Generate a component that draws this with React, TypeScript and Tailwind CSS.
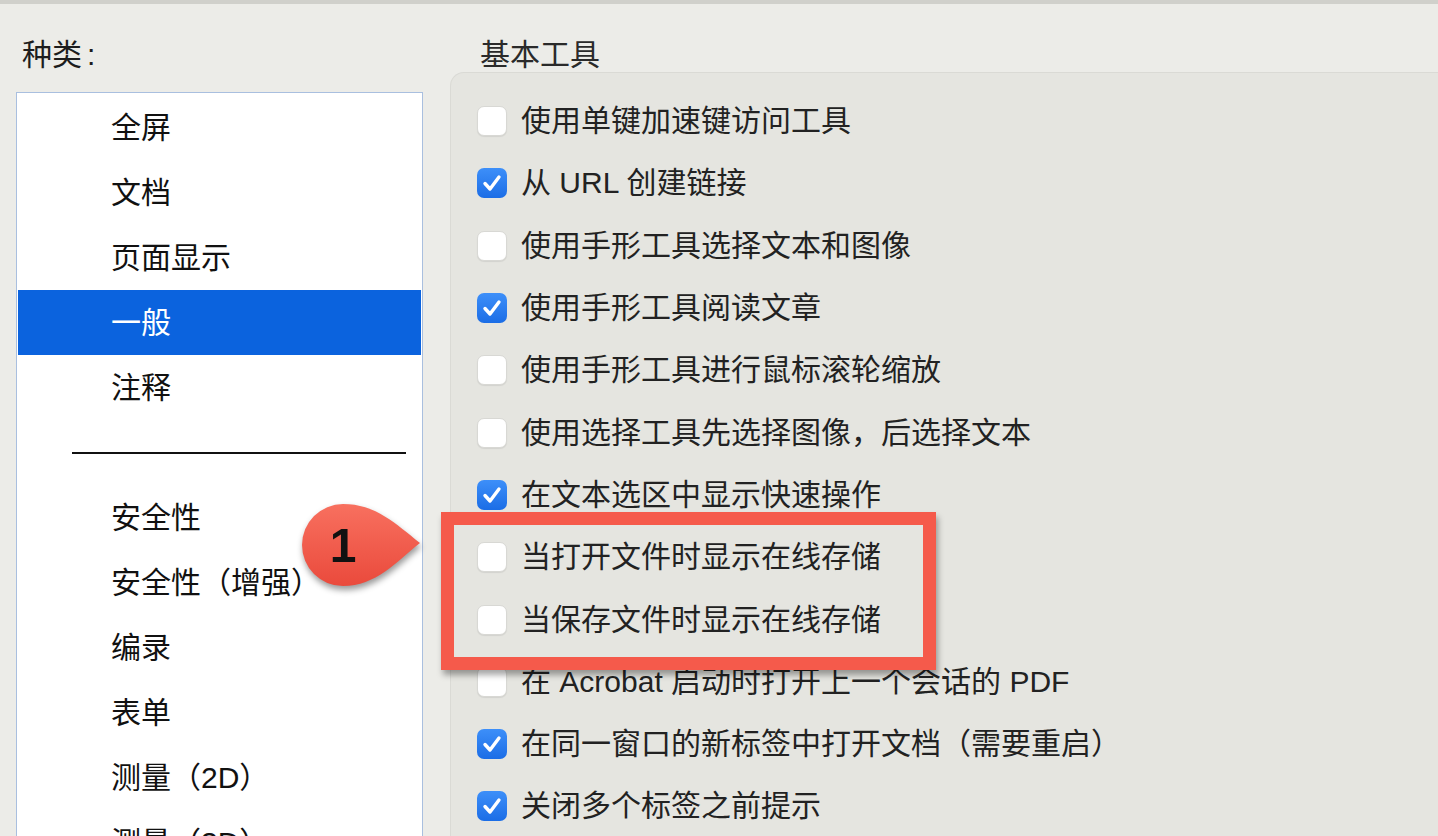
import React from 'react';

const font = { fontFamily: '"Liberation Sans", "Noto Sans CJK SC", sans-serif' };

const categories: (string | null)[] = [
  '全屏',
  '文档',
  '页面显示',
  '一般',
  '注释',
  null,
  '安全性',
  '安全性（增强）',
  '编录',
  '表单',
  '测量（2D）',
  '测量（3D）',
];

const options = [
  { label: '使用单键加速键访问工具', checked: false },
  { label: '从 URL 创建链接', checked: true },
  { label: '使用手形工具选择文本和图像', checked: false },
  { label: '使用手形工具阅读文章', checked: true },
  { label: '使用手形工具进行鼠标滚轮缩放', checked: false },
  { label: '使用选择工具先选择图像，后选择文本', checked: false },
  { label: '在文本选区中显示快速操作', checked: true },
  { label: '当打开文件时显示在线存储', checked: false },
  { label: '当保存文件时显示在线存储', checked: false },
  { label: '在 Acrobat 启动时打开上一个会话的 PDF', checked: false },
  { label: '在同一窗口的新标签中打开文档（需要重启）', checked: true },
  { label: '关闭多个标签之前提示', checked: true },
];

const Checkbox = ({ checked }: { checked: boolean }) =>
  checked ? (
    <div className="w-[30px] h-[30px] rounded-[7px] bg-gradient-to-b from-[#3d8ff9] to-[#1b6de6] flex items-center justify-center shrink-0">
      <svg width="22" height="22" viewBox="0 0 22 22" fill="none">
        <path d="M4 11.5 L9 17 L18 5" stroke="white" strokeWidth="3.4" strokeLinecap="round" strokeLinejoin="round" />
      </svg>
    </div>
  ) : (
    <div className="w-[30px] h-[30px] rounded-[7px] bg-white border border-[#d8d8d4] shadow-[0_1px_1px_rgba(0,0,0,0.08)] shrink-0" />
  );

export default function App() {
  return (
    <div
      className="relative w-[1438px] h-[836px] overflow-hidden bg-[#ecece8] border-t-4 border-[#d0d0cb] flex text-[30px] text-[#1d1d1d]"
      style={font}
    >
      {/* Categories */}
      <div className="w-[450px] shrink-0 flex flex-col pl-4">
        <div className="h-[88px] shrink-0 pt-[34px] pl-[6px] leading-[34px]">
          种类<span className="ml-[5px]">:</span>
        </div>
        <div className="w-[407px] flex-1 bg-white border border-[#a9bfdf] p-px pt-[2px]">
          {categories.map((c, i) =>
            c === null ? (
              <div key={i} className="h-[65px] flex items-center pl-[54px]">
                <div className="w-[334px] h-[2px] bg-[#111]" />
              </div>
            ) : (
              <div
                key={i}
                className={`h-[65px] shrink-0 flex items-center pl-[93px] leading-none ${
                  c === '一般' ? 'bg-[#0b63de] text-white' : 'text-[#111]'
                }`}
              >
                {c}
              </div>
            )
          )}
        </div>
      </div>

      {/* Basic tools */}
      <div className="flex-1 flex flex-col">
        <div className="h-[68px] shrink-0 pt-[34px] pl-[30px] leading-[34px] text-[#2a2a2a]">基本工具</div>
        <div className="flex-1 bg-[#e5e5e0] rounded-tl-[14px] border-l border-t border-[#dadad5] pt-[17px] pl-[26px]">
          {options.map((o) => (
            <div key={o.label} className="h-[62.3px] flex items-center gap-[14px] leading-none text-[#222]">
              <Checkbox checked={o.checked} />
              <span>{o.label}</span>
            </div>
          ))}
        </div>
      </div>

      {/* Highlight box */}
      <div className="absolute left-[441px] top-[508px] w-[495px] h-[158px] border-[13px] border-[#f55a4b] shadow-[2px_5px_6px_rgba(0,0,0,0.35)]" />

      {/* Callout */}
      <svg
        className="absolute left-[296px] top-[494px] drop-shadow-[1px_4px_3px_rgba(0,0,0,0.4)]"
        width="130"
        height="110"
        viewBox="0 0 130 110"
      >
        <defs>
          <linearGradient id="bubble" x1="0" y1="0" x2="0" y2="1">
            <stop offset="0" stopColor="#f8705f" />
            <stop offset="1" stopColor="#ea4a3c" />
          </linearGradient>
        </defs>
        <path
          d="M47 6 C80 6 100 26 124 45 C100 64 80 88 47 88 A41 41 0 0 1 47 6 Z"
          fill="url(#bubble)"
        />
        <text x="47" y="64" textAnchor="middle" fontSize="48" fontWeight="bold" fill="#111" fontFamily="Liberation Sans, sans-serif">
          1
        </text>
      </svg>
    </div>
  );
}
